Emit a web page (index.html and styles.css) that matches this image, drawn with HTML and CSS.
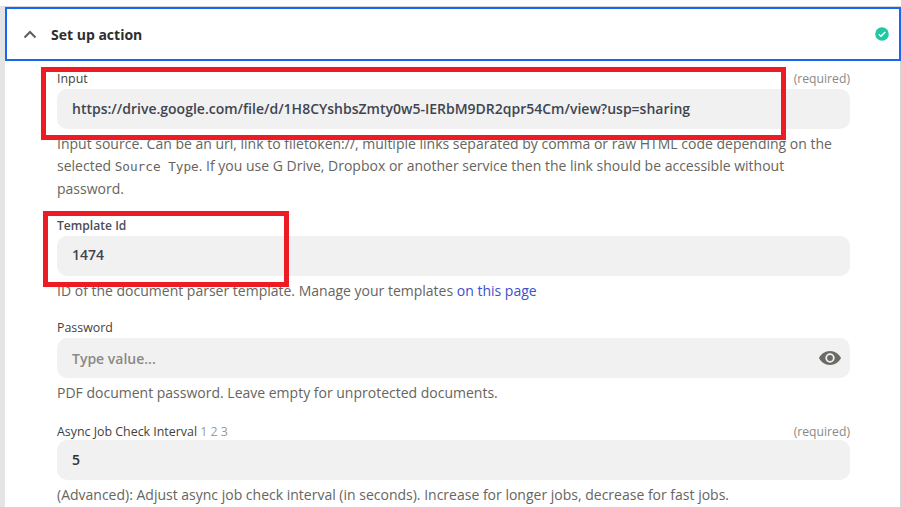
FILE: index.html
```html
<!DOCTYPE html>
<html lang="en">
<head>
<meta charset="utf-8">
<title>Set up action</title>
<link rel="stylesheet" href="styles.css">
</head>
<body>
<div class="panel">
  <header class="head">
    <svg class="chev" width="14" height="9" viewBox="0 0 14 9"><path d="M1.5 7.5 7 2l5.500 5.500" fill="none" stroke="#5f5e5a" stroke-width="2"/></svg>
    <span class="title">Set up action</span>
    <svg class="check" width="14" height="14" viewBox="0 0 14 14"><circle cx="7" cy="7" r="6.800" fill="#1fc9a4"/><path d="M3.800 7.200 6 9.300l4.200-4.400" fill="none" stroke="#fff" stroke-width="1.500"/></svg>
  </header>
  <div class="body">
    <section class="field f-input">
      <div class="label-row"><span class="label">Input</span><span class="req">(required)</span></div>
      <div class="box"><span class="val">https://drive.google.com/file/d/1H8CYshbsZmty0w5-IERbM9DR2qpr54Cm/view?usp=sharing</span></div>
      <p class="help">Input source. Can be an url, link to filetoken://, multiple links separated by comma or raw HTML code depending on the selected <code>Source Type</code>. If you use G Drive, Dropbox or another service then the link should be accessible without password.</p>
    </section>
    <section class="field f-template">
      <div class="label-row"><span class="label strong">Template Id</span></div>
      <div class="box"><span class="val">1474</span></div>
      <p class="help">ID of the document parser template. Manage your templates <a href="#">on this page</a></p>
    </section>
    <section class="field f-pass">
      <div class="label-row"><span class="label">Password</span></div>
      <div class="box"><span class="ph">Type value...</span>
        <svg class="eye" width="22" height="14" viewBox="0 0 22 14"><path fill-rule="evenodd" d="M11 0C6 0 2 3 0 7c2 4 6 7 11 7s9-3 11-7c-2-4-6-7-11-7Zm0 2.300a4.700 4.700 0 1 1 0 9.400 4.700 4.700 0 0 1 0-9.400Z" fill="#6b6a66"/><circle cx="11" cy="7" r="2.900" fill="#6b6a66"/></svg>
      </div>
      <p class="help">PDF document password. Leave empty for unprotected documents.</p>
    </section>
    <section class="field f-async">
      <div class="label-row"><span class="label">Async Job Check Interval <span class="steps">1 2 3</span></span><span class="req">(required)</span></div>
      <div class="box"><span class="val dark">5</span></div>
      <p class="help">(Advanced): Adjust async job check interval (in seconds). Increase for longer jobs, decrease for fast jobs.</p>
    </section>
  </div>
</div>
<div class="mark mark-1"></div>
<div class="mark mark-2"></div>
</body>
</html>
```

FILE: styles.css
```css
* { box-sizing: border-box; }
html, body { margin: 0; height: 100%; }
body {
  position: relative;
  width: 901px;
  height: 507px;
  overflow: hidden;
  background: #fff;
  font-family: "Open Sans", sans-serif;
  padding-top: 6px;
}
.panel {
  height: 501px;
  border-top: 1px solid #d6d6d6;
  border-left: 5px solid #e4e4e4;
  border-right: 1px solid #d6d6d6;
}
.head {
  display: flex;
  align-items: center;
  height: 54px;
  margin-right: -1px;
  border: 2px solid #1a66f0;
  padding: 0 10px 0 16px;
}
.chev { margin-right: 14px; }
.title { font-size: 14px; font-weight: 700; color: #2d2e2e; flex: 1; }
.body { padding: 8px 50px 0 52px; }
.label-row {
  display: flex;
  justify-content: space-between;
  align-items: center;
  height: 20px;
}
.f-async .label-row { height: 18px; }
.f-input .label-row { height: 18px; margin-bottom: 2px; }
.label { font-size: 12.400px; color: #403f3e; }
.label.strong { font-weight: 600; font-size: 12.100px; color: #4a4d55; }
.req { font-size: 12.200px; color: #8a8985; }
.steps { color: #9b9a96; }
.box {
  display: flex;
  align-items: center;
  justify-content: space-between;
  height: 40px;
  background: #f1f1f1;
  border-radius: 10px;
  padding: 0 9px 0 15px;
}
.val { font-size: 14px; font-weight: 600; color: #3f4550; margin-top: -2px; }
.val.dark { color: #2d2e2e; }
.ph { font-size: 14px; font-weight: 600; color: #8a8985; margin-top: 1px; }
.help {
  margin: 4px 0 0;
  font-size: 14px;
  line-height: 22.400px;
  color: #666560;
}
.help code { font-family: "DejaVu Sans Mono", monospace; font-size: 12.700px; line-height: 1; }
.help a { color: #3b4fd0; text-decoration: none; }
.f-template { margin-top: 15.300px; }
.f-pass { margin-top: 16px; }
.f-async { margin-top: 17.700px; }
.mark { position: absolute; border: 5px solid #ed1c24; }
.mark-1 { left: 41px; top: 67px; width: 745px; height: 73px; }
.mark-2 { left: 43px; top: 211px; width: 246px; height: 76px; }
```
